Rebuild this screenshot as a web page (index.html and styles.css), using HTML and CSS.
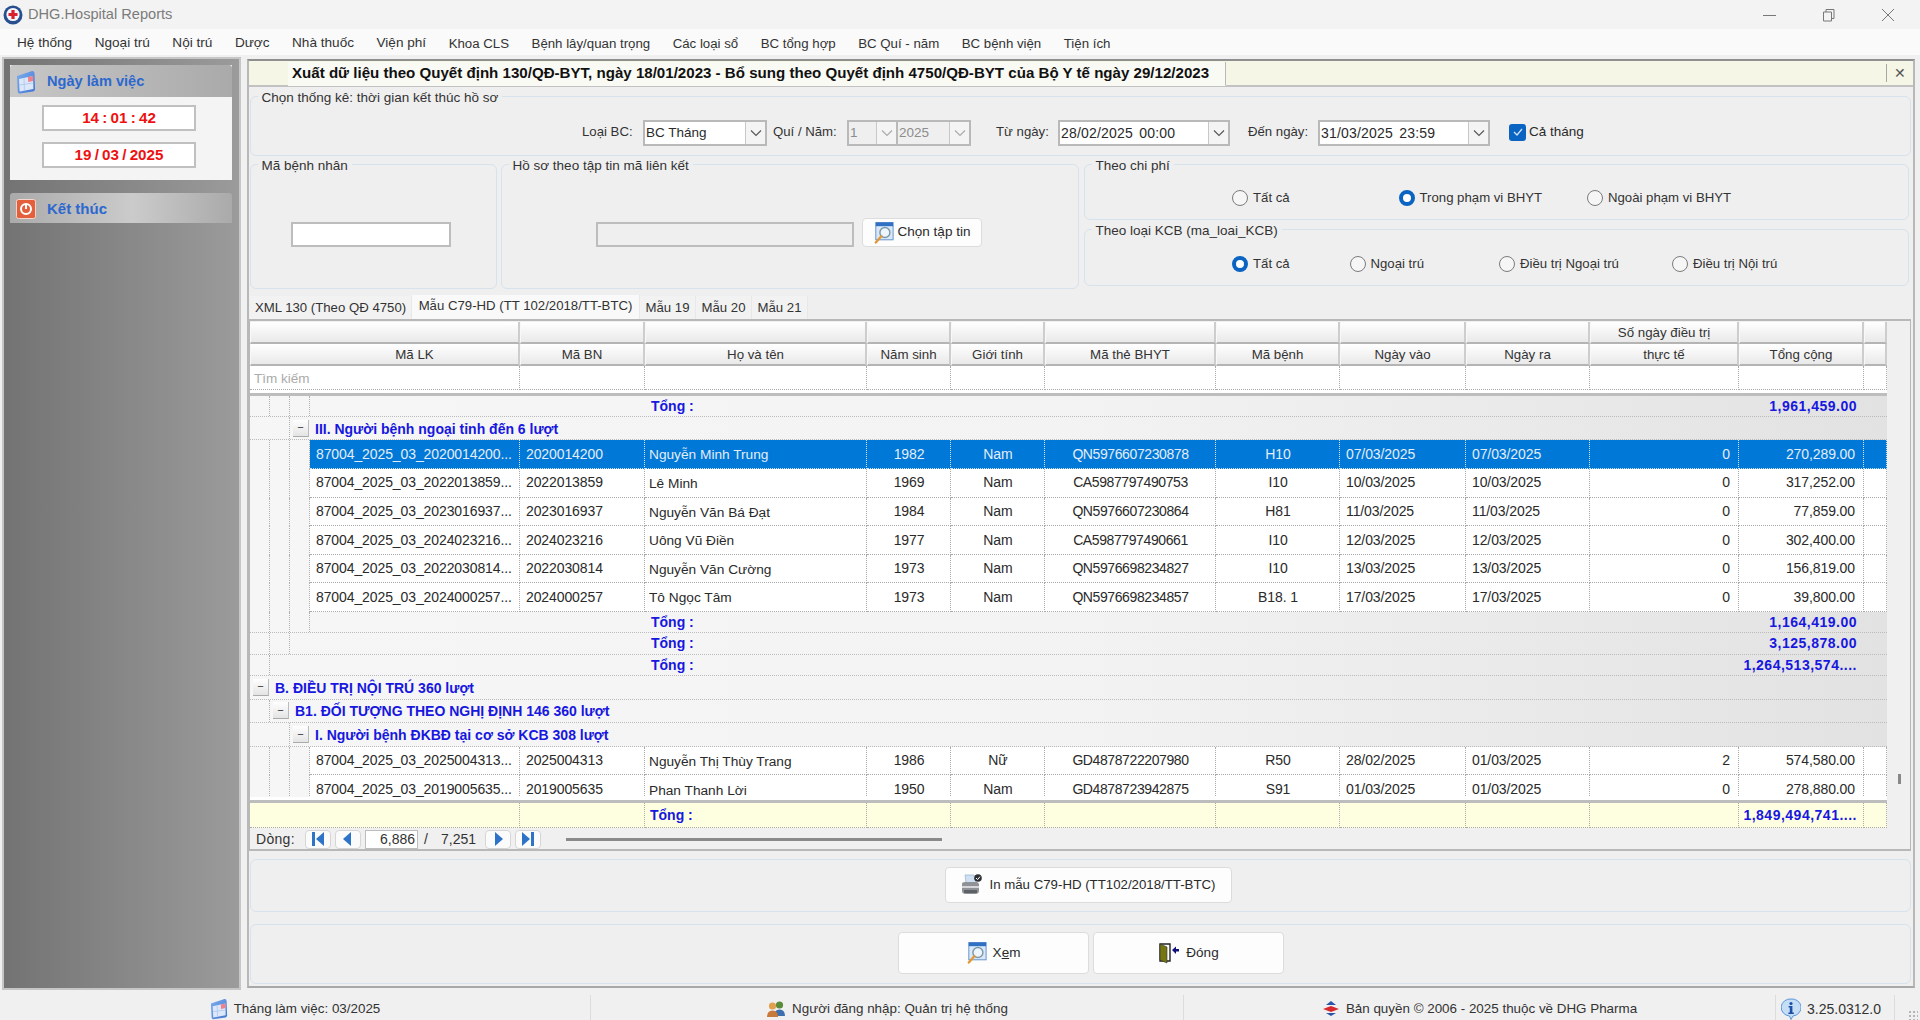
FILE: index.html
```html
<!DOCTYPE html>
<html lang="vi">
<head>
<meta charset="utf-8">
<title>DHG.Hospital Reports</title>
<link rel="stylesheet" href="styles.css">
</head>
<body>
<svg class="defs" width="0" height="0">
  <defs>
    <linearGradient id="calg" x1="0" y1="0" x2="1" y2="1"><stop offset="0" stop-color="#7fb0f0"/><stop offset="1" stop-color="#3f73cf"/></linearGradient>
    <symbol id="i-cal" viewBox="0 0 20 24">
      <path d="M1 6 L16 1 Q18 .5 18.5 3 L19 19 Q19 21 17 21.5 L4 23.5 Q2 23.7 1.8 21.5Z" fill="url(#calg)"/>
      <path d="M3 9 L17 6 L17.4 19 L3.6 21.4Z" fill="#dce8fa"/>
      <path d="M12 7 L17 6 L17.2 11 L12.2 12Z" fill="#f0808a"/>
      <path d="M3.4 15 L17.2 13M8 8.5 L8.4 20.5" stroke="#a9c3ea" stroke-width=".8" fill="none"/>
    </symbol>
    <symbol id="i-find" viewBox="0 0 22 25">
      <rect x="2" y="1" width="19" height="19" fill="#dbe8f8" stroke="#5b8ccc"/>
      <rect x="2" y="1" width="19" height="4" fill="#2f6fc4"/>
      <circle cx="12" cy="12" r="5.5" fill="#eef6fd" stroke="#7d98a8" stroke-width="1.6"/>
      <path d="M8 16 L2 23" stroke="#e09a3a" stroke-width="2.6" stroke-linecap="round"/>
    </symbol>
    <symbol id="i-first" viewBox="0 0 16 16"><rect x="2" y="1" width="3" height="14" fill="#2d74c8"/><path d="M14 1 V15 L6 8Z" fill="#2d74c8"/></symbol>
    <symbol id="i-prev" viewBox="0 0 16 16"><path d="M11 1 V15 L3 8Z" fill="#2d74c8"/></symbol>
    <symbol id="i-next" viewBox="0 0 16 16"><path d="M5 1 V15 L13 8Z" fill="#2d74c8"/></symbol>
    <symbol id="i-last" viewBox="0 0 16 16"><path d="M2 1 V15 L10 8Z" fill="#2d74c8"/><rect x="11" y="1" width="3" height="14" fill="#2d74c8"/></symbol>
    <symbol id="i-down" viewBox="0 0 12 8"><path d="M1 1.5 L6 6.5 L11 1.5" fill="none" stroke="currentColor" stroke-width="1.1"/></symbol>
  </defs>
</svg>

<header class="titlebar">
  <svg class="app-icon" width="20" height="20" viewBox="0 0 20 20"><circle cx="10" cy="10" r="9.5" fill="#274f8f"/><circle cx="10" cy="9.5" r="6.6" fill="#f4f6fa"/><path d="M8.4 5 H11.6 V8 H14.5 V11 H11.6 V14 H8.4 V11 H5.5 V8 H8.4Z" fill="#d8212c"/></svg>
  <span class="app-name">DHG.Hospital Reports</span>
  <div class="win-controls">
    <svg width="14" height="14" viewBox="0 0 14 14"><path d="M0 7.5 H13" stroke="#777" fill="none"/></svg>
    <svg width="14" height="14" viewBox="0 0 14 14"><path d="M1.5 4 H9.5 V13 H1.5Z M4 4 V1.5 H12 V10.5 H9.5" stroke="#777" fill="none"/></svg>
    <svg width="14" height="14" viewBox="0 0 14 14"><path d="M1 1 L13 13 M13 1 L1 13" stroke="#777" fill="none"/></svg>
  </div>
</header>

<nav class="menubar">
  <span>Hệ thống</span><span>Ngoại trú</span><span>Nội trú</span><span>Dược</span><span>Nhà thuốc</span><span>Viện phí</span><span>Khoa CLS</span><span>Bệnh lây/quan trọng</span><span>Các loại sổ</span><span>BC tổng hợp</span><span>BC Quí - năm</span><span>BC bệnh viện</span><span>Tiện ích</span>
</nav>

<div class="workspace">
  <aside class="sidebar">
    <section class="side-card">
      <div class="side-head"><svg width="20" height="24"><use href="#i-cal"/></svg><span>Ngày làm việc</span></div>
      <div class="side-body">
        <div class="clock">14 : 01 : 42</div>
        <div class="clock">19 / 03 / 2025</div>
      </div>
    </section>
    <section class="side-head side-exit">
      <svg width="20" height="20" viewBox="0 0 20 20"><rect x=".5" y=".5" width="19" height="19" rx="2" fill="#e4603c" stroke="#f5d6cc"/><circle cx="10" cy="10" r="5" fill="none" stroke="#fff" stroke-width="2"/><rect x="9" y="6" width="2" height="4" fill="#fff"/></svg>
      <span>Kết thúc</span>
    </section>
  </aside>

  <main class="main">
    <div class="strip">
      <div class="strip-tab">Xuất dữ liệu theo Quyết định 130/QĐ-BYT, ngày 18/01/2023 - Bổ sung theo Quyết định 4750/QĐ-BYT của Bộ Y tế ngày 29/12/2023</div>
      <div class="strip-close"><span>✕</span></div>
    </div>

    <section class="group g-period">
      <span class="legend">Chọn thống kê: thời gian kết thúc hồ sơ</span>
      <label class="lbl l-type">Loại BC:</label>
      <div class="combo c-type"><span class="val">BC Tháng</span><span class="drop"><svg width="12" height="8"><use href="#i-down"/></svg></span></div>
      <label class="lbl l-year">Quí / Năm:</label>
      <div class="combo c-spin disabled"><span class="val">1</span><span class="drop"><svg width="12" height="8"><use href="#i-down"/></svg></span></div>
      <div class="combo c-spin2 disabled"><span class="val">2025</span><span class="drop"><svg width="12" height="8"><use href="#i-down"/></svg></span></div>
      <label class="lbl l-from">Từ ngày:</label>
      <div class="combo c-date"><span class="val date">28/02/2025 00:00</span><span class="drop"><svg width="12" height="8"><use href="#i-down"/></svg></span></div>
      <label class="lbl l-to">Đến ngày:</label>
      <div class="combo c-date c-date2"><span class="val date">31/03/2025 23:59</span><span class="drop"><svg width="12" height="8"><use href="#i-down"/></svg></span></div>
      <span class="check"><svg width="12" height="10" viewBox="0 0 12 10"><path d="M2 5 L5 8 L10 2" fill="none" stroke="#cfe4fa" stroke-width="1.3"/></svg></span>
      <span class="check-label">Cả tháng</span>
    </section>

    <div class="filters">
      <section class="group g-patient">
        <span class="legend">Mã bệnh nhân</span>
        <div class="textbox"></div>
      </section>
      <section class="group g-file">
        <span class="legend">Hồ sơ theo tập tin mã liên kết</span>
        <div class="textbox disabled"></div>
        <button class="btn btn-file"><svg width="20" height="24"><use href="#i-find"/></svg>Chọn tập tin</button>
      </section>
      <div class="radio-col">
        <section class="group g-radio cost">
          <span class="legend">Theo chi phí</span>
          <span class="radio"><i></i>Tất cả</span>
          <span class="radio on"><i></i>Trong phạm vi BHYT</span>
          <span class="radio"><i></i>Ngoài phạm vi BHYT</span>
        </section>
        <section class="group g-radio kcb">
          <span class="legend">Theo loại KCB (ma_loai_KCB)</span>
          <span class="radio on"><i></i>Tất cả</span>
          <span class="radio"><i></i>Ngoại trú</span>
          <span class="radio"><i></i>Điều trị Ngoại trú</span>
          <span class="radio"><i></i>Điều trị Nội trú</span>
        </section>
      </div>
    </div>

    <div class="tabs">
      <span class="tab t-xml">XML 130 (Theo QĐ 4750)</span>
      <span class="tab t-c79 active">Mẫu C79-HD (TT 102/2018/TT-BTC)</span>
      <span class="tab t-m">Mẫu 19</span>
      <span class="tab t-m">Mẫu 20</span>
      <span class="tab t-m">Mẫu 21</span>
    </div>

    <section class="tabpanel">
      <div class="grid-wrap">
        <div class="grid">
          <div class="row head">
            <div class="span2"></div><div></div><div></div><div></div><div></div><div></div><div></div><div></div><div></div><div>Số ngày điều trị</div><div></div><div></div>
          </div>
          <div class="row head">
            <div class="span2 head-lk">Mã LK</div><div>Mã BN</div><div>Họ và tên</div><div>Năm sinh</div><div>Giới tính</div><div>Mã thẻ BHYT</div><div>Mã bệnh</div><div>Ngày vào</div><div>Ngày ra</div><div>thực tế</div><div>Tổng cộng</div><div></div>
          </div>
          <div class="row filter">
            <div class="span2 hint">Tìm kiếm</div><div></div><div></div><div></div><div></div><div></div><div></div><div></div><div></div><div></div><div></div><div></div>
          </div>
          <div class="divider"></div>
          <div class="body">
            <div class="row total"><div class="tree"><i></i><i></i><i></i></div><b class="t-label">Tổng :</b><b class="t-val">1,961,459.00</b></div>
            <div class="group-row"><span class="tree-in l2"></span><span class="exp">−</span><b>III. Người bệnh ngoại tỉnh đến 6 lượt</b></div>

            <div class="row data selected"><div class="tree"><i></i><i></i><i></i></div><div>87004_2025_03_2020014200...</div><div>2020014200</div><div class="name">Nguyễn Minh Trung</div><div class="c">1982</div><div class="c">Nam</div><div class="c">QN5976607230878</div><div class="c">H10</div><div>07/03/2025</div><div>07/03/2025</div><div class="r">0</div><div class="r">270,289.00</div><div></div></div>
            <div class="row data"><div class="tree"><i></i><i></i><i></i></div><div>87004_2025_03_2022013859...</div><div>2022013859</div><div class="name">Lê Minh</div><div class="c">1969</div><div class="c">Nam</div><div class="c">CA5987797490753</div><div class="c">I10</div><div>10/03/2025</div><div>10/03/2025</div><div class="r">0</div><div class="r">317,252.00</div><div></div></div>
            <div class="row data"><div class="tree"><i></i><i></i><i></i></div><div>87004_2025_03_2023016937...</div><div>2023016937</div><div class="name">Nguyễn Văn Bá Đạt</div><div class="c">1984</div><div class="c">Nam</div><div class="c">QN5976607230864</div><div class="c">H81</div><div>11/03/2025</div><div>11/03/2025</div><div class="r">0</div><div class="r">77,859.00</div><div></div></div>
            <div class="row data"><div class="tree"><i></i><i></i><i></i></div><div>87004_2025_03_2024023216...</div><div>2024023216</div><div class="name">Uông Vũ Điền</div><div class="c">1977</div><div class="c">Nam</div><div class="c">CA5987797490661</div><div class="c">I10</div><div>12/03/2025</div><div>12/03/2025</div><div class="r">0</div><div class="r">302,400.00</div><div></div></div>
            <div class="row data"><div class="tree"><i></i><i></i><i></i></div><div>87004_2025_03_2022030814...</div><div>2022030814</div><div class="name">Nguyễn Văn Cường</div><div class="c">1973</div><div class="c">Nam</div><div class="c">QN5976698234827</div><div class="c">I10</div><div>13/03/2025</div><div>13/03/2025</div><div class="r">0</div><div class="r">156,819.00</div><div></div></div>
            <div class="row data"><div class="tree"><i></i><i></i><i></i></div><div>87004_2025_03_2024000257...</div><div>2024000257</div><div class="name">Tô Ngọc Tâm</div><div class="c">1973</div><div class="c">Nam</div><div class="c">QN5976698234857</div><div class="c">B18. 1</div><div>17/03/2025</div><div>17/03/2025</div><div class="r">0</div><div class="r">39,800.00</div><div></div></div>

            <div class="row total"><div class="tree"><i></i><i></i><i></i></div><b class="t-label">Tổng :</b><b class="t-val">1,164,419.00</b></div>
            <div class="row total"><div class="tree"><i></i><i></i></div><b class="t-label">Tổng :</b><b class="t-val">3,125,878.00</b></div>
            <div class="row total"><div class="tree"><i></i></div><b class="t-label">Tổng :</b><b class="t-val">1,264,513,574....</b></div>

            <div class="group-row"><span class="exp">−</span><b>B. ĐIỀU TRỊ NỘI TRÚ 360 lượt</b></div>
            <div class="group-row"><span class="tree-in l1"></span><span class="exp">−</span><b>B1. ĐỐI TƯỢNG THEO NGHỊ ĐỊNH 146 360 lượt</b></div>
            <div class="group-row"><span class="tree-in l2"></span><span class="exp">−</span><b>I. Người bệnh ĐKBĐ tại cơ sở KCB 308 lượt</b></div>

            <div class="row data"><div class="tree"><i></i><i></i><i></i></div><div>87004_2025_03_2025004313...</div><div>2025004313</div><div class="name">Nguyễn Thị Thùy Trang</div><div class="c">1986</div><div class="c">Nữ</div><div class="c">GD4878722207980</div><div class="c">R50</div><div>28/02/2025</div><div>01/03/2025</div><div class="r">2</div><div class="r">574,580.00</div><div></div></div>
            <div class="row data"><div class="tree"><i></i><i></i><i></i></div><div>87004_2025_03_2019005635...</div><div>2019005635</div><div class="name">Phan Thanh Lời</div><div class="c">1950</div><div class="c">Nam</div><div class="c">GD4878723942875</div><div class="c">S91</div><div>01/03/2025</div><div>01/03/2025</div><div class="r">0</div><div class="r">278,880.00</div><div></div></div>
          </div>
          <div class="divider foot-div"></div>
          <div class="row foot">
            <div class="span2"></div><div></div><div class="t-foot">Tổng :</div><div></div><div></div><div></div><div></div><div></div><div></div><div></div><div class="t-foot r">1,849,494,741....</div><div></div>
          </div>
        </div>
        <div class="vscroll"><span></span></div>
      </div>
      <div class="pager">
        <span class="pg-label">Dòng:</span>
        <span class="pg-btn"><svg width="16" height="16"><use href="#i-first"/></svg></span>
        <span class="pg-btn"><svg width="16" height="16"><use href="#i-prev"/></svg></span>
        <span class="pg-input">6,886</span>
        <span class="pg-sep">/</span>
        <span class="pg-total">7,251</span>
        <span class="pg-btn"><svg width="16" height="16"><use href="#i-next"/></svg></span>
        <span class="pg-btn"><svg width="16" height="16"><use href="#i-last"/></svg></span>
        <span class="pg-track"></span>
      </div>
    </section>

    <section class="group g-print">
      <button class="btn btn-print">
        <svg width="22" height="22" viewBox="0 0 22 22"><path d="M4 1 L13 1 L15 9 L5 9Z" fill="#cfe0f2" stroke="#8fa8c0" stroke-width=".6"/><path d="M1 10 Q1 8 4 8 H15 Q18 8 18 11 V17 Q18 20 14 20 H5 Q1 20 1 17Z" fill="#8f9296"/><path d="M1 12 H18 V14 H1Z" fill="#d5d7da"/><path d="M3 16 H16 V19 H3Z" fill="#5d6064"/><circle cx="17" cy="4" r="3.8" fill="#2c2f33"/><path d="M15 4 L16.6 5.6 L19 2.6" stroke="#fff" fill="none"/></svg>
        In mẫu C79-HD (TT102/2018/TT-BTC)
      </button>
    </section>

    <section class="group g-actions">
      <button class="btn btn-act"><svg width="20" height="24"><use href="#i-find"/></svg><span>X<u>e</u>m</span></button>
      <button class="btn btn-act"><svg width="22" height="22" viewBox="0 0 22 22"><path d="M2 2 H12 V19 H2Z" fill="none" stroke="#222" stroke-width="1.4"/><path d="M2 2 L9 5 V21 L2 18Z" fill="#77750f" stroke="#333" stroke-width=".6"/><path d="M14 8 L18 4.5 V7 H21 V9.5 H18 V12Z" fill="#10107a"/></svg><span>Đón<u>g</u></span></button>
    </section>
  </main>
</div>

<footer class="statusbar">
  <div class="st"><svg width="18" height="22"><use href="#i-cal"/></svg>Tháng làm việc: 03/2025</div>
  <div class="st"><svg width="20" height="18" viewBox="0 0 20 18"><circle cx="13.5" cy="5" r="3.6" fill="#5a8a3a"/><path d="M8 16 Q8 9.5 13.5 9.5 Q19 9.5 19 16Z" fill="#3e6fb0"/><circle cx="6.5" cy="6" r="3.6" fill="#e0a050"/><path d="M1 17 Q1 10.5 6.5 10.5 Q12 10.5 12 17Z" fill="#c87a3a"/></svg>Người đăng nhập: Quản trị hệ thống</div>
  <div class="st"><svg width="18" height="18" viewBox="0 0 18 18"><path d="M9 1 L14 5 H4Z" fill="#2a55a8"/><path d="M1 9 L9 6 L17 9 L9 12Z" fill="#d8282e"/><path d="M4 13 H14 L9 16Z" fill="#2a55a8"/></svg>Bản quyền © 2006 - 2025 thuộc về DHG Pharma</div>
  <div class="st st-ver"><svg width="20" height="22" viewBox="0 0 20 22"><path d="M10 1 A9 8.5 0 0 1 12 18 L10 21.5 L8.5 18 A9 8.5 0 0 1 10 1Z" fill="#c5def5" stroke="#5a98d8"/><circle cx="10" cy="5.5" r="1.6" fill="#1c4fa8"/><path d="M7.6 8 H11.4 V14.5 H12.8 V16 H7.4 V14.5 H8.8 V9.5 H7.6Z" fill="#1c4fa8"/></svg>3.25.0312.0</div>
  <div class="grip"><i></i></div>
</footer>
</body>
</html>
```
FILE: styles.css
```css
* { box-sizing: border-box; }
html, body { margin: 0; padding: 0; }
body {
  width: 1920px; height: 1020px; overflow: hidden;
  display: flex; flex-direction: column;
  background: #f0f0f0; color: #2a2a2a;
  font: 13.5px/1.2 "Liberation Sans", Arial, sans-serif;
}
.defs { position: absolute; }
button { font: inherit; color: inherit; }

/* title + menu */
.titlebar { height: 29px; flex: none; display: flex; align-items: center; background: #f3f3f3; padding: 1px 0 0 3px; }
.app-name { margin-left: 5px; font-size: 14.6px; color: #7b7b7b; }
.win-controls { margin-left: auto; display: flex; gap: 45px; margin-right: 25px; }
.menubar { height: 26px; flex: none; display: flex; align-items: center; gap: 22.5px; background: #fafafa; padding: 3px 0 0 17px; color: #333; font-size: 13.25px; }
.menubar span:nth-child(-n+6) { font-size: 13.6px; }

/* workspace */
.workspace { height: 935px; flex: none; display: flex; }
.sidebar {
  width: 239px; height: 933px; margin: 2px 0 0 2px; padding: 6px 6px 0;
  border: 2px solid #c6c6c6;
  background: linear-gradient(90deg, #737373, #9b9b9b);
}
.side-card { background: #f4f4f4; height: 115px; width: 222px; }
.side-head {
  height: 32px; display: flex; align-items: center; gap: 11px; padding: 1px 0 0 6px;
  background: linear-gradient(90deg, #c7c7c7, #aaa);
  color: #2c68cf; font-weight: bold; font-size: 14.6px; border-radius: 3px 3px 0 0;
}
.side-body { padding: 8px 0 0 32px; }
.clock {
  width: 154px; height: 26px; margin-bottom: 11px;
  display: flex; align-items: center; justify-content: center;
  background: #fff; border: 2px solid #c0c0c0;
  color: #ee1111; font-weight: bold; font-size: 15.2px; word-spacing: -1px;
}
.side-exit { width: 222px; height: 30px; margin-top: 13px; font-size: 15px; background: linear-gradient(90deg, #aaa, #cbcbcb 55%, #aaa); }

.main {
  width: 1668px; height: 929px; margin: 4px 0 0 6px; padding: 0 2px 0 1px;
  display: flex; flex-direction: column; background: #efefef;
  border: 2px solid #b8b8b8; border-top-color: #8f8f8f; border-bottom-color: #a8a8a8;
}
.strip { height: 26px; flex: none; margin-left: -1px; margin-right: -2px; display: flex; background: #f6f6e6; border-bottom: 2px solid #c2c2c2; }
.strip-tab {
  width: 938px; margin: 1px 0 -1px 39px; padding-left: 4px;
  display: flex; align-items: center;
  background: #fafaf4; border-right: 1px solid #b9b9b9; border-bottom: 1px solid #fafaf4;
  color: #111; font-weight: bold; font-size: 15.1px; white-space: nowrap;
}
.strip-close { margin-left: auto; width: 27px; margin-top: 3px; margin-bottom: 3px; border-left: 1px solid #a8a8a8; display: flex; align-items: center; justify-content: center; font-size: 14px; color: #555; }

.group { position: relative; border: 1.5px solid #d6e2ec; border-radius: 6px; }
.legend { position: absolute; top: -7px; left: 6.5px; padding: 0 4px; background: #efefef; color: #333; line-height: 16px; white-space: nowrap; }

.g-period { height: 60px; margin-top: 9px; flex: none; display: flex; align-items: center; padding: 14px 0 0 331px; }
.lbl { color: #333; margin-top: -2px; white-space: nowrap; font-size: 13.2px; }
.combo { height: 26px; display: flex; background: #fff; border: 2px solid #b9b9b9; }
.combo .val { flex: 1; padding-left: 1px; display: flex; align-items: center; white-space: nowrap; }
.combo .drop { width: 20px; display: flex; align-items: center; justify-content: center; background: #f4f4f4; color: #555; border-left: 1px solid #c8c8c8; }
.combo.disabled { background: #efefef; color: #8c8c8c; }
.combo.disabled .drop { color: #aaa; }
.l-type { width: 49px; }
.c-type { width: 124px; margin-left: 12px; }
.l-year { width: 64px; margin-left: 6px; }
.c-spin { width: 50px; margin-left: 10px; border-right-width: 1px; }
.c-spin2 { width: 74px; border-left-width: 1px; }
.l-from { width: 55px; margin-left: 25px; }
.c-date { width: 172px; margin-left: 7px; }
.date { letter-spacing: .2px; word-spacing: 2px; font-size: 14px; }
.l-to { width: 63px; margin-left: 18px; }
.check { width: 17px; height: 17px; margin: -2px 0 0 19px; display: flex; align-items: center; justify-content: center; background: #0a64c2; border-radius: 3px; }
.check-label { margin: -2px 0 0 3px; }

.filters { height: 125px; margin-top: 8px; flex: none; display: flex; }
.g-patient { width: 247px; display: flex; padding: 57px 0 0 40px; }
.textbox { height: 25px; background: #fff; border: 2px solid #bdbdbd; width: 160px; }
.g-file { width: 578px; margin-left: 4px; display: flex; padding: 53px 0 0 94px; }
.g-file .textbox { width: 258px; margin-top: 4px; background: #efefef; }
.btn {
  display: flex; align-items: center; justify-content: center;
  background: #fdfdfd; border: 1.5px solid #dcdcdc; border-radius: 4px; padding: 0; cursor: default;
}
.btn-file { width: 120px; height: 29px; margin-left: 8px; gap: 4px; }
.radio-col { width: 825px; margin-left: 5px; display: flex; flex-direction: column; gap: 9px; height: 122px; }
.g-radio { display: grid; align-items: center; padding: 12px 0 0 147px; }
.g-radio.cost { height: 56px; grid-template-columns: 166.5px 188.5px auto; }
.g-radio.kcb { height: 57px; grid-template-columns: 117.5px 149.5px 173px auto; }
.radio { display: flex; align-items: center; gap: 5px; white-space: nowrap; color: #333; font-size: 13.2px; }
.radio i { width: 16px; height: 16px; flex: none; border-radius: 50%; background: #f6f6f6; border: 1.5px solid #7b7b7b; }
.radio.on i { background: #fff; border: 4.5px solid #0a64c2; }

/* tabs */
.tabs { height: 24px; margin: 6px 0 0 -1px; flex: none; display: flex; padding-left: 1px; align-items: flex-end; font-size: 13.2px; }
.tab { height: 23px; display: flex; align-items: center; justify-content: center; white-space: nowrap; color: #333; background: #f2f2f2; border-right: 1px solid #e8e8e8; }
.tab.active { height: 24px; background: #f9f9f9; padding-bottom: 2px; }
.t-xml { width: 162px; }
.t-c79 { width: 228px; }
.t-m { width: 56px; }

.tabpanel { height: 532px; margin-left: -2px; flex: none; border: 2px solid #b8b8b8; border-right-width: 1px; padding-top: 1px; background: #f0f0f0; }
.grid-wrap { display: flex; height: 506px; }
.grid { width: 1637px; background: #fff; display: flex; flex-direction: column; }
.vscroll { width: 23px; padding: 452px 0 0 11px; }
.vscroll span { display: block; width: 3px; height: 10px; background: #888; }

.row { display: grid; grid-template-columns: 60px 210px 125px 222px 84px 94px 171px 124px 126px 124px 149px 125px 23px; }
.span2 { grid-column: span 2; }
.head { height: 22px; color: #333; font-size: 13.3px; }
.head > div {
  display: flex; align-items: center; justify-content: center; white-space: nowrap; padding-top: 2px;
  background: linear-gradient(#fff, #e9e9e9);
  border-right: 2px solid #cdcdcd; border-bottom: 2px solid #b4b4b4; border-left: 1px solid #f8f8f8;
}
.head > div.head-lk { padding-left: 60px; }
.filter { height: 24px; }
.filter > div { border-right: 1px dotted #aaa; border-bottom: 1px dotted #aaa; }
.hint { color: #aaa; padding: 5px 0 0 4px; }
.divider { height: 3px; margin-top: 3px; background: #bdbdbd; flex: none; }
.body { height: 401px; overflow: hidden; flex: none; font-size: 14px; background: linear-gradient(90deg, #f6f6f6, #f3f3f3 50%, #e2e2e2); }

.total { height: 21.33px; border-bottom: 1px dotted #bbb; color: #1717e0; }
.total b { display: flex; align-items: center; white-space: nowrap; padding-top: 1px; }
.t-label { grid-column: 4; padding-left: 6px; }
.t-val { grid-column: 11 / span 2; justify-content: flex-end; padding-right: 7px; letter-spacing: .5px; }
.tree { display: flex; height: 100%; }
.tree i { width: 20px; height: 100%; flex: none; border-right: 1px dotted #b0b0b0; }

.group-row { height: 23.67px; display: flex; align-items: center; border-bottom: 1px dotted #bbb; color: #1717e0; white-space: nowrap; }
.group-row:nth-child(2) { height: 23px; }
.group-row b { margin-left: 6px; padding-top: 2px; }
.tree-in { display: block; height: 100%; flex: none; }
.tree-in.l1 { width: 20px; border-right: 1px dotted #b0b0b0; }
.tree-in.l2 { width: 40px; border-right: 1px dotted #b0b0b0; }
.exp {
  width: 16px; height: 17px; margin-left: 3px; flex: none; display: flex; align-items: center; justify-content: center;
  background: linear-gradient(#fff, #e4e4e4); border-right: 1px solid #bbb; border-bottom: 1px solid #aaa;
  font-size: 11px; line-height: 1; color: #333;
}

.data { height: 28.6px; }
.data > div:not(.tree) {
  display: flex; align-items: center; padding: 0 5px 0 6px; white-space: nowrap; overflow: hidden;
  background: #fff; border-right: 1px dotted #aaa; border-bottom: 1px dotted #aaa; letter-spacing: -.1px;
}
.data > div.name { padding: 3px 0 0 4px; font-size: 13.7px; letter-spacing: 0; }
.data > div.c { justify-content: center; }
.data > div.c:nth-child(7) { letter-spacing: -.4px; }
.data > div.r { justify-content: flex-end; padding-right: 8px; }
.selected > div:not(.tree) { background: #0078d7; color: #e4edf6; border-color: #cfe3f5; }

.foot-div { margin-top: 3px; }
.foot { height: 25px; font-size: 14px; }
.foot > div {
  display: flex; align-items: center; background: #fefee0;
  border-right: 1px dotted #aaa; border-bottom: 1px dotted #aaa;
}
.t-foot { color: #1717e0; font-weight: bold; padding-left: 5px; white-space: nowrap; }
.t-foot.r { justify-content: flex-end; padding: 0 6px 0 0; letter-spacing: .5px; }

.pager { height: 22px; display: flex; align-items: center; color: #333; font-size: 14px; }
.pg-label { width: 55px; padding-left: 6px; letter-spacing: .3px; }
.pg-btn { width: 26px; height: 19px; margin-right: 4px; display: flex; align-items: center; justify-content: center; background: #fbfbfb; border: 1px solid #d6d6d6; border-radius: 4px; }
.pg-input { width: 53px; height: 19px; display: flex; align-items: center; justify-content: flex-end; padding-right: 2px; background: #fff; border: 1px solid #bdbdbd; }
.pg-sep { margin: 0 0 0 6px; width: 17px; }
.pg-total { width: 44px; }
.pg-track { width: 376px; height: 3px; margin-left: 21px; background: #8a8a8a; }

.g-print { height: 53px; margin-top: 8px; flex: none; display: flex; padding: 7px 0 0 694px; }
.btn-print { width: 287px; height: 36px; gap: 6px; font-size: 13.25px; }
.g-actions { height: 60px; margin-top: 12px; flex: none; display: flex; gap: 4px; padding: 7px 0 0 647px; }
.btn-act { width: 191px; height: 42px; gap: 6px; }

/* status */
.statusbar { height: 30px; flex: none; display: grid; grid-template-columns: 591px 593px 592px 119px 25px; padding: 5px 0 2px; color: #333; font-size: 13.4px; }
.st { display: flex; align-items: center; justify-content: center; gap: 6px; padding-top: 3px; border-right: 1.5px solid #dcdcdc; white-space: nowrap; }
.st-ver { font-size: 14px; padding-right: 8px; }
.grip { position: relative; }
.grip i { position: absolute; right: 2px; bottom: 0; width: 10px; height: 10px; background: radial-gradient(circle, #b5b5b5 1px, transparent 1.2px) 0 0 / 4px 4px; }
```
